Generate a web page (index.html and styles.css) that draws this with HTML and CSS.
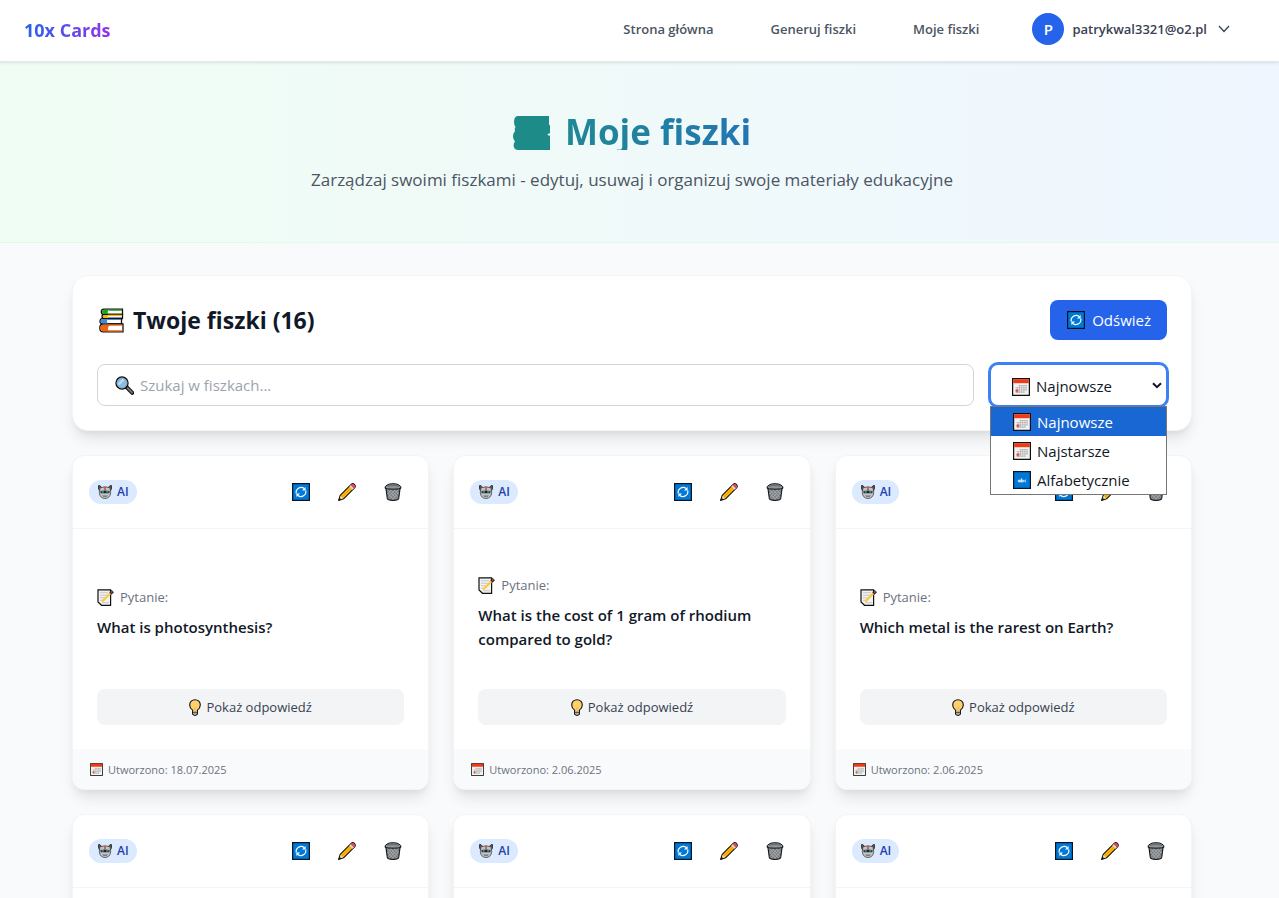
FILE: index.html
```html
<!DOCTYPE html>
<html lang="pl">
<head>
<meta charset="utf-8">
<meta name="viewport" content="width=device-width, initial-scale=1">
<title>Moje fiszki</title>
<link rel="stylesheet" href="styles.css">
</head>
<body>
<svg class="sprite" aria-hidden="true">
  <symbol id="refresh" viewBox="0 0 18 18">
    <rect x=".6" y=".6" width="16.8" height="16.8" fill="#0078d7" stroke="#061423" stroke-width="1.2"/>
    <g fill="none" stroke="#fff" stroke-width="1.2"><path d="M4.300 10.500A5 5 0 0 1 12.200 5.400"/><path d="M13.700 7.500A5 5 0 0 1 5.800 12.600"/></g>
    <path d="M13.600 4v3.400h-3.600zM4.400 14v-3.400H8z" fill="#fff"/>
  </symbol>
  <symbol id="pencil" viewBox="0 0 18 18">
    <path d="M.6 17.4 2.2 12.4 13.4 1.2Q14.800 0 16.400 1.500 18 3.200 16.800 4.600L5.600 15.800z" fill="#ffb900" stroke="#111" stroke-width="1.1" stroke-linejoin="round"/>
    <path d="M12 2.800 13.600 1.200Q14.900.4 16.300 1.700 17.600 3.100 16.700 4.400L15.200 6z" fill="#e74856"/>
    <path d="M11.300 3.500 12.600 2.200 15.800 5.400 14.500 6.700z" fill="#d8d8d8"/>
    <path d="M4 14 13 5" stroke="#f7941d" stroke-width="1"/>
    <path d="M1.300 16.700 2.700 12.900 5.200 15.300z" fill="#f2d6b3"/><path d="M.6 17.400 1.500 14.800 3.300 16.500z" fill="#111"/>
  </symbol>
  <symbol id="trash" viewBox="0 0 18 18">
    <path d="M1.800 4.500 3.300 15.500Q3.500 17.400 9 17.400T14.700 15.500L16.200 4.500z" fill="#767b80" stroke="#111" stroke-width="1.100"/>
    <path d="m3 6 9.500 10M6 6l8 8.500M9.500 6l5.200 5.200M3.500 10l6 6.500M15 6 5.500 16M12 6l-8 8.500M8.500 6 3.400 11.200M14.800 9.500 8.500 16.500" stroke="#b4b9bd" stroke-width=".7"/>
    <path d="M1 5.200Q.8 3 3 2.200 4.200.7 9 .7T15 2.200Q17.200 3 17 5.200 15.800 6.200 9 6.200T1 5.200z" fill="#8f9498" stroke="#111" stroke-width="1"/>
    <path d="M3.200 3.200Q9 1.800 14.800 3.200" fill="none" stroke="#626970" stroke-width="1.200"/>
  </symbol>
  <symbol id="robot" viewBox="0 0 14 14">
    <path d="M1.600 6 .5 3.800V.6h1.400L3.600 2.400zM12.400 6l1.100-2.200V.6h-1.400L10.400 2.400z" fill="#555" stroke="#222" stroke-width=".8"/>
    <path d="M2 2.800Q7 .8 12 2.800L12.700 7.600Q12.200 13.300 7 13.500 1.800 13.300 1.300 7.600z" fill="#c5c5c5" stroke="#444" stroke-width=".8"/>
    <path d="M6.200 1.900h1.600v3.200H6.200z" fill="#e8442d"/>
    <path d="M2.400 5.900Q7 5.200 11.600 5.900L11.300 8.200H2.700z" fill="#222"/>
    <path d="M3.600 6.300h2.200v1.300H3.600zM8.200 6.300h2.200v1.300H8.200z" fill="#3abbe8"/>
    <path d="M4.300 10.300h5.400L8.700 12H5.300z" fill="#666"/><path d="M4.800 10.900h4.400" stroke="#ddd" stroke-width=".5"/>
  </symbol>
  <symbol id="calendar" viewBox="0 0 18 18">
    <path d="M.6.600h16.800v16.800H.6z" fill="#f2f2f2" stroke="#111" stroke-width="1.200"/>
    <path d="M1.200 1.200h15.600v4H1.200z" fill="#f03a17"/>
    <g stroke="#b4b4b4" stroke-width=".8"><path d="M6.500 7.500H15M3.500 9.700H15M3.500 11.900H15M3.500 14.100h9"/><path d="M5.300 9v6M7.500 7v8M9.700 7v8M11.900 7v8M14.100 7v5.500"/></g>
    <path d="M3.400 12.800h3M4.900 11.300v3.200" stroke="#f0503a" stroke-width="1.400"/>
  </symbol>
  <symbol id="abc" viewBox="0 0 18 18">
    <rect x=".6" y=".6" width="16.800" height="16.800" fill="#0078d7" stroke="#061423" stroke-width="1.200"/>
    <g fill="none" stroke="#fff" stroke-width=".9"><circle cx="6" cy="10" r=".9"/><path d="M7.200 8.600v2.800M8.600 7.400v4M12.900 8.900a1.100 1.100 0 1 0 0 2.200"/><circle cx="9.700" cy="10" r=".9"/></g>
  </symbol>
  <symbol id="books" viewBox="0 0 25 25">
    <g stroke="#111" stroke-width="1.300">
      <path d="M5 1.200h18.500v5.300H5Q2.300 6.500 2.300 3.800T5 1.200z" fill="#fff"/>
      <path d="M6 6.500h17.500v4H6Q3 10.500 3 8.500t3-2z" fill="#fff"/>
      <path d="M4 10.500h18.500v5.500H4Q1 16 1 13.200t3-2.700z" fill="#fff"/>
      <path d="M4 16h20v7.800H4Q.8 23.800.8 20T4 16z" fill="#fff"/>
    </g>
    <path d="M5 1.800h5Q7.500 4 9.500 6H5Q3 5.800 3 3.800t2-2z" fill="#16a816"/><path d="M10 2.200h13" stroke="#16a816" stroke-width="1.200"/>
    <path d="M6 7h3.500Q8 8.500 9.500 10H6Q3.700 9.800 3.700 8.500T6 7z" fill="#ffb900"/><path d="M9 7.400h14" stroke="#ffb900" stroke-width="1.400"/>
    <path d="M4 11.100h5Q7 13.500 9 15.500H4Q1.700 15 1.700 13.200T4 11.100z" fill="#3a8dde"/><path d="M9 11.500h13" stroke="#3a8dde"/>
    <path d="M4 16.700h7Q7.500 20 10 23.200H4Q1.500 23 1.500 20T4 16.700z" fill="#f7630c"/><path d="M9 17.100h14.300M9 22.800h14.500" stroke="#f7630c" stroke-width="1.200"/>
  </symbol>
  <symbol id="search" viewBox="0 0 19 19">
    <path d="m11.500 11 5.800 5.800" stroke="#111" stroke-width="4" stroke-linecap="round"/><path d="m12.500 12 4.500 4.500" stroke="#777" stroke-width="1.800" stroke-linecap="round"/>
    <circle cx="7" cy="7" r="6" fill="#83beec" stroke="#111" stroke-width="1.400"/><circle cx="7" cy="7" r="5" fill="none" stroke="#999" stroke-width=".8"/>
    <path d="M3.500 8.500 8.500 3.500" stroke="#b9ddf7" stroke-width="2.400"/>
  </symbol>
  <symbol id="memo" viewBox="0 0 17 17">
    <path d="M1 .8h12.600v15.500H4.500L1 13z" fill="#f2f2f2" stroke="#111" stroke-width="1.200"/>
    <path d="M3 3.800h8M3 6.300h8M3 8.800h6M3 11.300h4M5 13.800h7" stroke="#c6c6c6" stroke-width="1.100"/>
    <path d="m5.200 12.500 9-9" stroke="#ffc83d" stroke-width="2.200"/><path d="m13.400 4.500 2.400-2.400" stroke="#222" stroke-width="3.200"/><path d="m14.200 3.600 1.200-1.200" stroke="#e74856" stroke-width="1.400"/>
  </symbol>
  <symbol id="bulb" viewBox="0 0 12 17">
    <path d="M3.600 11.200Q.7 8.800.7 5.900A5.300 5.200 0 0 1 11.300 5.900Q11.300 8.800 8.400 11.200V15.200Q6 17.500 3.600 15.200z" fill="#ffd070" stroke="#111" stroke-width="1.100"/>
    <path d="M4.200 12h3.600v3.100Q6 16.300 4.200 15.100z" fill="#a8a8a8"/><path d="M4 13.500h4" stroke="#333" stroke-width=".7"/>
    <path d="M4.300 7.500 5.300 11.500h1.400L7.700 7.500 6 8.400z" fill="#fbbf4a"/>
  </symbol>
</svg>

<header class="topbar">
  <a class="logo" href="#">10x Cards</a>
  <nav class="nav">
    <a href="#">Strona główna</a>
    <a href="#">Generuj fiszki</a>
    <a href="#">Moje fiszki</a>
  </nav>
  <button class="user" type="button">
    <span class="avatar">P</span>
    <span>patrykwal3321@o2.pl</span>
    <svg class="user-arrow" viewBox="0 0 12 8" aria-hidden="true"><path d="m1 1 5 5.500L11 1" fill="none" stroke="#374151" stroke-width="1.300"/></svg>
  </button>
</header>

<section class="hero">
  <h1 class="hero-title">
    <svg class="hero-icon" viewBox="0 0 37 34" aria-hidden="true"><path d="M4.500 0H36v8.500l1 1v7.800q-2.500.2-2.500 1.200t2.500 1.200V34H4.500Q.8 33.500.6 29.500.5 26.800 2 25.500 0 23.500 0 20.500T2 15Q.8 13.500 2.500 11 1 9.500 1 5.500 1.300.3 4.500 0z" fill="#1d8c89"/></svg>
    <span class="hero-text">Moje fiszki</span>
  </h1>
  <p class="hero-sub">Zarządzaj swoimi fiszkami - edytuj, usuwaj i organizuj swoje materiały edukacyjne</p>
</section>

<main class="content">
  <section class="panel">
    <div class="panel-head">
      <h2 class="panel-title"><svg class="i-books" aria-hidden="true"><use href="#books"/></svg>Twoje fiszki (16)</h2>
      <button class="reload" type="button"><svg class="i18" aria-hidden="true"><use href="#refresh"/></svg>Odśwież</button>
    </div>
    <div class="filters">
      <div class="search">
        <svg class="search-icon" aria-hidden="true"><use href="#search"/></svg>
        <input class="search-input" type="text" placeholder="Szukaj w fiszkach..." aria-label="Szukaj w fiszkach">
      </div>
      <div class="sort">
        <svg class="sort-icon" aria-hidden="true"><use href="#calendar"/></svg>
        <select class="sort-select" aria-label="Sortowanie">
          <option>Najnowsze</option>
          <option>Najstarsze</option>
          <option>Alfabetycznie</option>
        </select>
        <svg class="sort-arrow" viewBox="0 0 10 7" aria-hidden="true"><path d="m1 1.200 4 4 4-4" fill="none" stroke="#111827" stroke-width="2"/></svg>
        <ul class="menu" role="listbox" aria-label="Sortowanie">
          <li class="menu-item menu-item-on" role="option" aria-selected="true"><svg class="i18" aria-hidden="true"><use href="#calendar"/></svg>Najnowsze</li>
          <li class="menu-item" role="option"><svg class="i18" aria-hidden="true"><use href="#calendar"/></svg>Najstarsze</li>
          <li class="menu-item" role="option"><svg class="i18" aria-hidden="true"><use href="#abc"/></svg>Alfabetycznie</li>
        </ul>
      </div>
    </div>
  </section>

  <section class="grid">
    <article class="card">
      <div class="card-head"><span class="badge"><svg class="i-robot" aria-hidden="true"><use href="#robot"/></svg>AI</span>
        <div class="actions"><button class="act" type="button" aria-label="Odśwież"><svg class="i18"><use href="#refresh"/></svg></button><button class="act" type="button" aria-label="Edytuj"><svg class="i18"><use href="#pencil"/></svg></button><button class="act" type="button" aria-label="Usuń"><svg class="i18"><use href="#trash"/></svg></button></div></div>
      <div class="card-body">
        <div class="question"><p class="label"><svg class="i-memo" aria-hidden="true"><use href="#memo"/></svg>Pytanie:</p><h3 class="q">What is photosynthesis?</h3></div>
        <button class="answer" type="button"><svg class="i-bulb" aria-hidden="true"><use href="#bulb"/></svg>Pokaż odpowiedź</button>
      </div>
      <div class="card-foot"><svg class="i-date" aria-hidden="true"><use href="#calendar"/></svg>Utworzono: 18.07.2025</div>
    </article>
    <article class="card">
      <div class="card-head"><span class="badge"><svg class="i-robot" aria-hidden="true"><use href="#robot"/></svg>AI</span>
        <div class="actions"><button class="act" type="button" aria-label="Odśwież"><svg class="i18"><use href="#refresh"/></svg></button><button class="act" type="button" aria-label="Edytuj"><svg class="i18"><use href="#pencil"/></svg></button><button class="act" type="button" aria-label="Usuń"><svg class="i18"><use href="#trash"/></svg></button></div></div>
      <div class="card-body">
        <div class="question"><p class="label"><svg class="i-memo" aria-hidden="true"><use href="#memo"/></svg>Pytanie:</p><h3 class="q">What is the cost of 1 gram of rhodium compared to gold?</h3></div>
        <button class="answer" type="button"><svg class="i-bulb" aria-hidden="true"><use href="#bulb"/></svg>Pokaż odpowiedź</button>
      </div>
      <div class="card-foot"><svg class="i-date" aria-hidden="true"><use href="#calendar"/></svg>Utworzono: 2.06.2025</div>
    </article>
    <article class="card">
      <div class="card-head"><span class="badge"><svg class="i-robot" aria-hidden="true"><use href="#robot"/></svg>AI</span>
        <div class="actions"><button class="act" type="button" aria-label="Odśwież"><svg class="i18"><use href="#refresh"/></svg></button><button class="act" type="button" aria-label="Edytuj"><svg class="i18"><use href="#pencil"/></svg></button><button class="act" type="button" aria-label="Usuń"><svg class="i18"><use href="#trash"/></svg></button></div></div>
      <div class="card-body">
        <div class="question"><p class="label"><svg class="i-memo" aria-hidden="true"><use href="#memo"/></svg>Pytanie:</p><h3 class="q">Which metal is the rarest on Earth?</h3></div>
        <button class="answer" type="button"><svg class="i-bulb" aria-hidden="true"><use href="#bulb"/></svg>Pokaż odpowiedź</button>
      </div>
      <div class="card-foot"><svg class="i-date" aria-hidden="true"><use href="#calendar"/></svg>Utworzono: 2.06.2025</div>
    </article>
    <article class="card">
      <div class="card-head"><span class="badge"><svg class="i-robot" aria-hidden="true"><use href="#robot"/></svg>AI</span>
        <div class="actions"><button class="act" type="button" aria-label="Odśwież"><svg class="i18"><use href="#refresh"/></svg></button><button class="act" type="button" aria-label="Edytuj"><svg class="i18"><use href="#pencil"/></svg></button><button class="act" type="button" aria-label="Usuń"><svg class="i18"><use href="#trash"/></svg></button></div></div>
      <div class="card-body"><div class="question"></div></div>
    </article>
    <article class="card">
      <div class="card-head"><span class="badge"><svg class="i-robot" aria-hidden="true"><use href="#robot"/></svg>AI</span>
        <div class="actions"><button class="act" type="button" aria-label="Odśwież"><svg class="i18"><use href="#refresh"/></svg></button><button class="act" type="button" aria-label="Edytuj"><svg class="i18"><use href="#pencil"/></svg></button><button class="act" type="button" aria-label="Usuń"><svg class="i18"><use href="#trash"/></svg></button></div></div>
      <div class="card-body"><div class="question"></div></div>
    </article>
    <article class="card">
      <div class="card-head"><span class="badge"><svg class="i-robot" aria-hidden="true"><use href="#robot"/></svg>AI</span>
        <div class="actions"><button class="act" type="button" aria-label="Odśwież"><svg class="i18"><use href="#refresh"/></svg></button><button class="act" type="button" aria-label="Edytuj"><svg class="i18"><use href="#pencil"/></svg></button><button class="act" type="button" aria-label="Usuń"><svg class="i18"><use href="#trash"/></svg></button></div></div>
      <div class="card-body"><div class="question"></div></div>
    </article>
  </section>
</main>
</body>
</html>
```

FILE: styles.css
```css
*, *::before, *::after { box-sizing: border-box; }
html { scrollbar-width: none; }
body {
  margin: 0;
  background: #f9fafb;
  color: #111827;
  font: 15px/24px "Open Sans", "Noto Sans", sans-serif;
}
h1, h2, h3, p, ul { margin: 0; padding: 0; }
button, input, select { font: inherit; color: inherit; margin: 0; }
button { border: 0; background: none; cursor: pointer; }
a { text-decoration: none; color: inherit; }
svg { display: block; flex: none; }
.sprite { position: absolute; width: 0; height: 0; }
.i18 { width: 18px; height: 18px; }

.topbar {
  position: relative;
  z-index: 1;
  display: flex;
  align-items: center;
  height: 62px;
  padding: 0 49px 3px 24px;
  background: #fff;
  border-bottom: 1px solid #e5e7eb;
  box-shadow: 0 1px 3px rgba(0, 0, 0, .1);
}
.logo {
  margin-right: auto;
  padding-top: 2px;
  font-size: 18px;
  font-weight: 700;
  line-height: 28px;
  background: linear-gradient(to right, #2563eb, #9333ea);
  background-clip: text;
  color: transparent;
}
.nav { display: flex; gap: 57px; margin-right: 53px; font-size: 13px; font-weight: 600; color: #4b5563; }
.user { display: flex; align-items: center; gap: 8px; padding: 0; font-size: 13px; font-weight: 600; color: #374151; }
.avatar {
  display: grid;
  place-items: center;
  width: 32px;
  height: 32px;
  border-radius: 50%;
  background: #2563eb;
  color: #fff;
  font-size: 15px;
}
.user-arrow { width: 12px; height: 8px; margin-left: 3px; }

.hero {
  padding: 48px 39px 48px 24px;
  text-align: center;
  background: linear-gradient(to right, #f0fdf4, #eff6ff);
  border-bottom: 1px solid #dcfce7;
}
.hero-title { display: flex; justify-content: center; align-items: flex-end; gap: 15px; margin-bottom: 16px; }
.hero-icon { width: 37px; height: 34px; }
.hero-text {
  height: 40px;
  font-size: 35px;
  line-height: 44px;
  background: linear-gradient(to right, #1f8894, #2376b2);
  background-clip: text;
  color: transparent;
}
.hero-sub { font-size: 17px; line-height: 28px; color: #4b5563; }

.content { padding: 32px 39px 32px 24px; }
.panel, .grid { max-width: 1120px; margin: 0 auto 24px; }
.panel, .card {
  background: #fff;
  border: 1px solid #f3f4f6;
  box-shadow: 0 10px 15px -3px rgba(0, 0, 0, .1), 0 4px 6px -2px rgba(0, 0, 0, .05);
}
.panel { padding: 24px; border-radius: 16px; }
.panel-head { display: flex; justify-content: space-between; align-items: center; margin-bottom: 24px; }
.panel-title { display: flex; align-items: center; gap: 9px; padding-left: 2px; font-size: 23px; line-height: 32px; }
.i-books { width: 25px; height: 25px; }
.reload { display: flex; align-items: center; gap: 7px; height: 40px; padding: 0 16px 0 17px; border-radius: 8px; background: #2563eb; color: #fff; }
.filters { display: flex; gap: 16px; }
.search { position: relative; flex: 1; }
.search-input {
  display: block;
  width: 100%;
  height: 42px;
  padding: 0 16px 0 42px;
  border: 1px solid #d1d5db;
  border-radius: 8px;
  background: #fff;
}
.search-input::placeholder { color: #9ca3af; opacity: 1; }
.search-icon { position: absolute; left: 18px; top: 12px; width: 19px; height: 19px; }
.sort { position: relative; width: 177px; }
.sort-select {
  display: block;
  width: 100%;
  height: 42px;
  padding: 2px 24px 0 45px;
  appearance: none;
  border: 1px solid #3b82f6;
  border-radius: 8px;
  box-shadow: 0 0 0 2px #3b82f6;
  background: #fff;
  outline: 0;
}
.sort-icon { position: absolute; left: 22px; top: 14px; width: 18px; height: 18px; }
.sort-arrow { position: absolute; right: 5px; top: 18px; width: 10px; height: 7px; }
.menu {
  position: absolute;
  z-index: 2;
  top: 100%;
  left: 0;
  right: 0;
  list-style: none;
  background: #fff;
  border: 1px solid #767676;
}
.menu-item { display: flex; align-items: center; gap: 6px; height: 29px; padding: 1px 0 0 22px; }
.menu-item-on { background: #1967d2; color: #fff; }

.grid { display: grid; grid-template-columns: repeat(3, minmax(0, 1fr)); gap: 24px; }
.card { border-radius: 12px; overflow: hidden; }
.card-head { display: flex; justify-content: space-between; align-items: center; padding: 16px; border-bottom: 1px solid #f3f4f6; }
.badge {
  display: flex;
  align-items: center;
  gap: 5px;
  height: 24px;
  padding: 0 8px 0 9px;
  border-radius: 12px;
  background: #dbeafe;
  color: #1e40af;
  font-size: 12px;
  font-weight: 600;
}
.i-robot { width: 14px; height: 14px; }
.actions { display: flex; gap: 8px; }
.act { display: grid; place-items: center; width: 38px; height: 40px; padding: 0; border-radius: 8px; }
.card-body { padding: 24px; }
.question { display: flex; flex-direction: column; justify-content: center; gap: 8px; min-height: 120px; margin-bottom: 16px; }
.label { display: flex; align-items: center; gap: 6px; font-size: 13px; line-height: 20px; color: #6b7280; }
.i-memo { width: 17px; height: 17px; }
.q { font-size: 15px; font-weight: 600; line-height: 24px; }
.answer {
  display: flex;
  align-items: center;
  justify-content: center;
  gap: 5px;
  width: 100%;
  height: 36px;
  border-radius: 8px;
  background: #f3f4f6;
  color: #374151;
  font-size: 13px;
}
.i-bulb { width: 12px; height: 17px; }
.card-foot { display: flex; align-items: center; gap: 5px; height: 40px; padding: 1px 17px 0; background: #f9fafb; color: #6b7280; font-size: 11px; }
.i-date { width: 13px; height: 13px; }
```
